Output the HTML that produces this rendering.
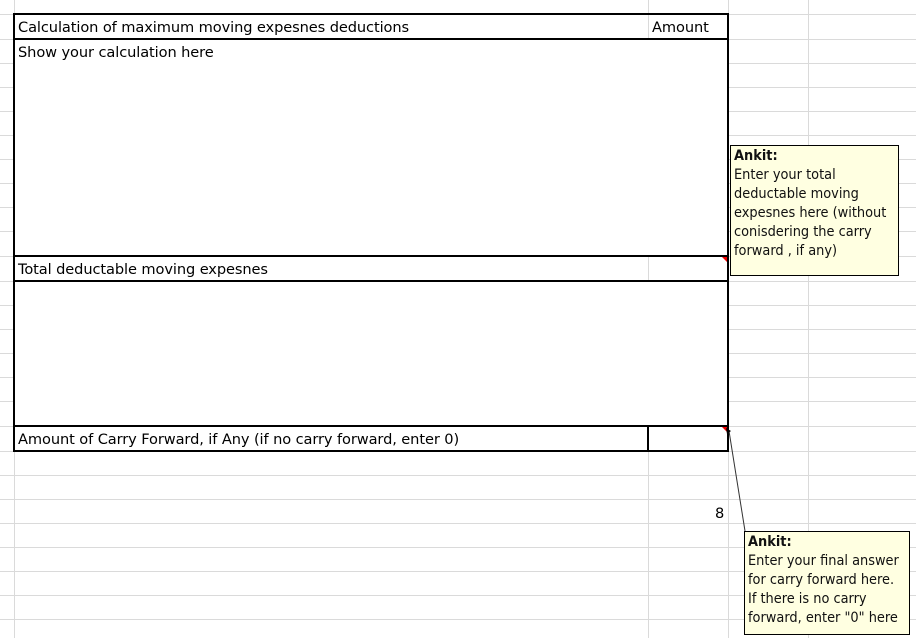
<!DOCTYPE html>
<html><head><meta charset="utf-8"><style>
body{margin:0;width:916px;height:638px;background:#fff;position:relative;overflow:hidden;font-family:"Liberation Sans",sans-serif}
.t{position:absolute;font-size:14.6px;color:#000;white-space:nowrap;font-family:"DejaVu Sans","Liberation Sans",sans-serif;letter-spacing:-0.1px}
.c{position:absolute;background:#ffffe1;border:1px solid #000;font-family:"DejaVu Sans Condensed","Liberation Sans",sans-serif;font-size:14.4px;line-height:19px;padding:1px 3px;box-sizing:border-box;color:#111;white-space:nowrap}
</style></head><body>
<svg width="916" height="638" style="position:absolute;left:0;top:0">
<g stroke="#dadada" stroke-width="1">
<line x1="14.5" y1="0" x2="14.5" y2="638"/><line x1="648.5" y1="0" x2="648.5" y2="638"/><line x1="728.5" y1="0" x2="728.5" y2="638"/><line x1="808.5" y1="0" x2="808.5" y2="638"/>
<line x1="0" y1="14.5" x2="916" y2="14.5"/><line x1="0" y1="39.5" x2="916" y2="39.5"/>
<line x1="0" y1="63.5" x2="916" y2="63.5"/><line x1="0" y1="87.5" x2="916" y2="87.5"/><line x1="0" y1="111.5" x2="916" y2="111.5"/><line x1="0" y1="135.5" x2="916" y2="135.5"/><line x1="0" y1="159.5" x2="916" y2="159.5"/><line x1="0" y1="183.5" x2="916" y2="183.5"/><line x1="0" y1="207.5" x2="916" y2="207.5"/><line x1="0" y1="231.5" x2="916" y2="231.5"/><line x1="0" y1="256.5" x2="916" y2="256.5"/><line x1="0" y1="281.5" x2="916" y2="281.5"/><line x1="0" y1="305.5" x2="916" y2="305.5"/><line x1="0" y1="329.5" x2="916" y2="329.5"/><line x1="0" y1="353.5" x2="916" y2="353.5"/><line x1="0" y1="377.5" x2="916" y2="377.5"/><line x1="0" y1="401.5" x2="916" y2="401.5"/><line x1="0" y1="426.5" x2="916" y2="426.5"/><line x1="0" y1="451.5" x2="916" y2="451.5"/><line x1="0" y1="475.5" x2="916" y2="475.5"/><line x1="0" y1="499.5" x2="916" y2="499.5"/><line x1="0" y1="523.5" x2="916" y2="523.5"/><line x1="0" y1="547.5" x2="916" y2="547.5"/><line x1="0" y1="571.5" x2="916" y2="571.5"/><line x1="0" y1="595.5" x2="916" y2="595.5"/><line x1="0" y1="619.5" x2="916" y2="619.5"/>
</g>
<rect x="15" y="15" width="633" height="24" fill="#fff"/>
<rect x="15" y="40" width="713" height="216" fill="#fff"/>
<rect x="15" y="282" width="713" height="144" fill="#fff"/>
<g stroke="#000" stroke-width="2">
<rect x="14" y="14" width="714" height="437" fill="none"/>
<line x1="14" y1="39" x2="728" y2="39"/><line x1="14" y1="256" x2="728" y2="256"/><line x1="14" y1="281" x2="728" y2="281"/><line x1="14" y1="426" x2="728" y2="426"/><line x1="648" y1="426" x2="648" y2="451"/>
</g>
<polygon points="722,257 727,257 727,262" fill="#e00"/>
<polygon points="722,427 727,427 727,432" fill="#e00"/>
<line x1="729" y1="431" x2="745" y2="531" stroke="#333" stroke-width="1"/>
<polygon points="726,428 731,431 727,434" fill="#000"/>
</svg>
<div class="t" style="left:18px;top:19px">Calculation of maximum moving expesnes deductions</div>
<div class="t" style="left:652px;top:19px">Amount</div>
<div class="t" style="left:18px;top:44px">Show your calculation here</div>
<div class="t" style="left:18px;top:261px">Total deductable moving expesnes</div>
<div class="t" style="left:18px;top:431px">Amount of Carry Forward, if Any (if no carry forward, enter 0)</div>
<div class="t" style="left:715px;top:505px">8</div>
<div class="c" style="left:730px;top:145px;width:169px;height:131px"><b>Ankit:</b><br>Enter your total<br>deductable moving<br>expesnes here (without<br>conisdering the carry<br>forward , if any)</div>
<div class="c" style="left:744px;top:531px;width:166px;height:104px"><b>Ankit:</b><br>Enter your final answer<br>for carry forward here.<br>If there is no carry<br>forward, enter "0" here</div>
</body></html>
